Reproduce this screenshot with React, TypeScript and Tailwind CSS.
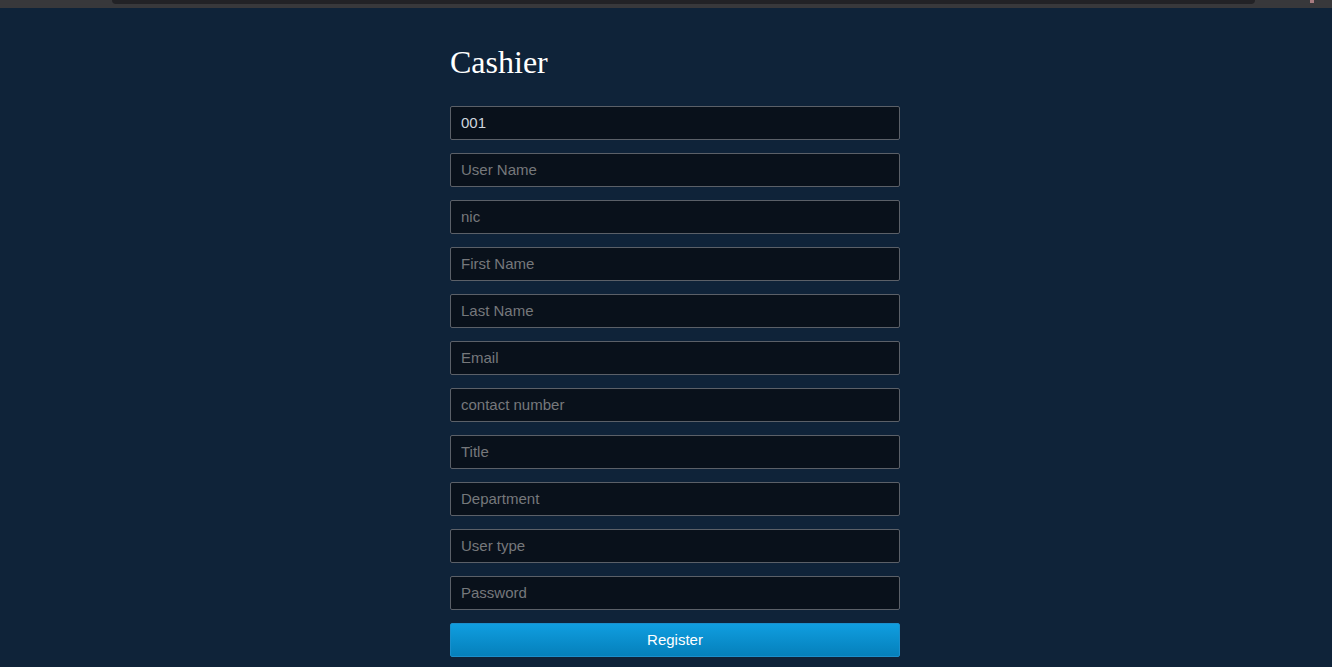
const fields = [
  { placeholder: "User Name" },
  { placeholder: "nic" },
  { placeholder: "First Name" },
  { placeholder: "Last Name" },
  { placeholder: "Email" },
  { placeholder: "contact number" },
  { placeholder: "Title" },
  { placeholder: "Department" },
  { placeholder: "User type" },
  { placeholder: "Password", type: "password" },
];

const inputClass =
  "block w-full h-[34px] px-[10px] pb-[2px] bg-[#09111b] border border-[#5b6068] rounded-[2px] text-[15px] text-[#cfd6de] placeholder:text-[#76787b] outline-none font-['Liberation_Sans',Arial,sans-serif]";

export default function App() {
  return (
    <div className="min-h-screen bg-[#0f2339] flex flex-col">
      <div className="h-2 bg-[#38383b] flex">
        <div className="ml-[112px] w-[1143px] h-1 bg-[#222226] rounded-b-[6px]" />
        <div className="ml-auto mr-[18px] w-[4px] h-[3px] bg-[#a77b80]" />
      </div>

      <div className="w-[468px] mx-auto pl-[18px] pt-[37px] pb-10">
        <h1 className="text-[32px] leading-[35px] text-white font-['Liberation_Serif','Times_New_Roman',serif] mb-[26px]">
          Cashier
        </h1>

        <form className="flex flex-col gap-[13px]" onSubmit={(e) => e.preventDefault()}>
          <input className={inputClass} defaultValue="001" />
          {fields.map((f) => (
            <input
              key={f.placeholder}
              type={f.type ?? "text"}
              placeholder={f.placeholder}
              className={inputClass}
            />
          ))}
          <button
            type="submit"
            className="h-[34px] w-full rounded-[2px] border border-[#1b8fcc] bg-gradient-to-b from-[#109ee0] to-[#0580bb] text-white text-[15px] font-['Liberation_Sans',Arial,sans-serif]"
          >
            Register
          </button>
        </form>
      </div>
    </div>
  );
}
